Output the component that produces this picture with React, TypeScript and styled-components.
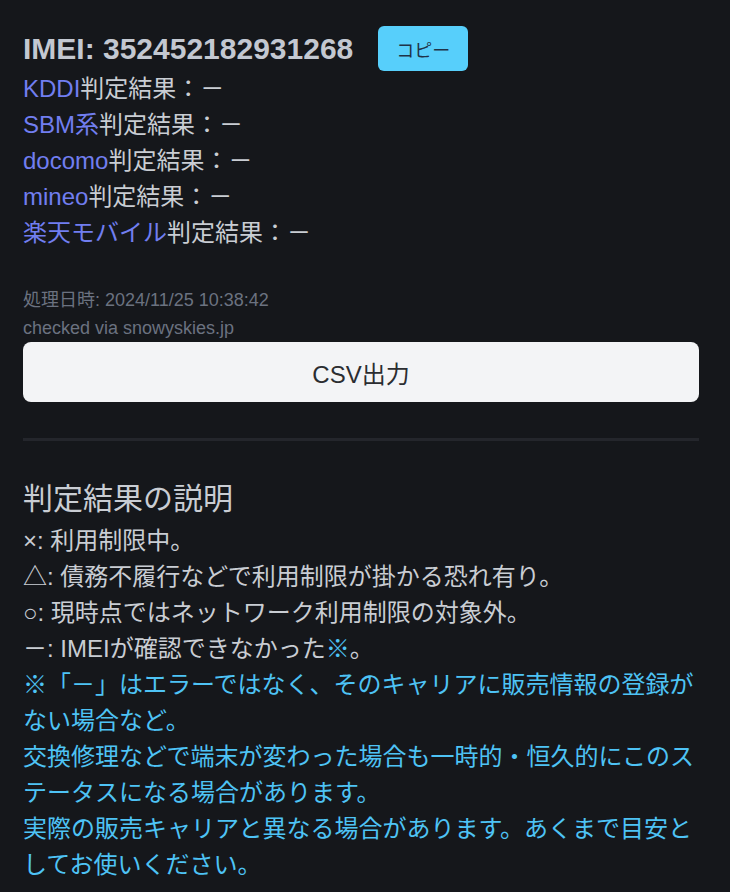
import React from 'react';
import styled, { createGlobalStyle } from 'styled-components';

const GlobalStyle = createGlobalStyle`
  html, body {
    margin: 0;
    padding: 0;
    background: #15171b;
  }
  body {
    font-family: "Liberation Sans", "Noto Sans CJK JP", sans-serif;
    color: #c9cdd3;
  }
`;

const Page = styled.main`
  min-height: 892px;
  box-sizing: border-box;
  padding: 26px 31px 0 23px;
`;

const ImeiRow = styled.div`
  display: flex;
  align-items: center;
  height: 45px;
`;

const Imei = styled.h1`
  margin: 0;
  font-size: 30px;
  line-height: 36px;
  font-weight: 700;
  color: #c3c8d1;
`;

const CopyButton = styled.button`
  margin-left: 25px;
  width: 90px;
  height: 45px;
  border: none;
  border-radius: 6px;
  background: #57cffb;
  color: #1f3348;
  font-family: "Liberation Sans", "Noto Sans CJK JP", sans-serif;
  font-size: 18px;
  cursor: pointer;
`;

const ResultList = styled.div`
  display: flex;
  flex-direction: column;
`;

const ResultLine = styled.div`
  font-size: 24px;
  line-height: 36px;
`;

const Carrier = styled.span`
  color: #717ef0;
`;

const Meta = styled.div`
  margin-top: 35px;
  font-size: 18px;
  line-height: 28px;
  color: #6b7280;
`;

const CsvButton = styled.button`
  display: block;
  width: 100%;
  height: 60px;
  border: none;
  border-radius: 8px;
  background: #f3f4f6;
  color: #2b2d31;
  font-family: "Liberation Sans", "Noto Sans CJK JP", sans-serif;
  font-size: 24px;
  cursor: pointer;
`;

const Divider = styled.hr`
  margin: 36px 0 0;
  border: none;
  height: 3px;
  background: #24262c;
`;

const SectionTitle = styled.h2`
  margin: 40px 0 6px;
  font-size: 30px;
  line-height: 36px;
  font-weight: 400;
  color: #c9cdd3;
`;

const Para = styled.p<{ $note?: boolean }>`
  margin: 0;
  font-size: 24px;
  line-height: 36px;
  color: ${(p) => (p.$note ? '#4ec3f5' : '#c9cdd3')};
`;

const Mark = styled.span`
  color: #4ec3f5;
`;

const carriers = ['KDDI', 'SBM系', 'docomo', 'mineo', '楽天モバイル'];

export default function App() {
  return (
    <>
      <GlobalStyle />
      <Page>
        <ImeiRow>
          <Imei>IMEI: 352452182931268</Imei>
          <CopyButton>コピー</CopyButton>
        </ImeiRow>
        <ResultList>
          {carriers.map((c) => (
            <ResultLine key={c}>
              <Carrier>{c}</Carrier>判定結果：－
            </ResultLine>
          ))}
        </ResultList>
        <Meta>
          処理日時: 2024/11/25 10:38:42
          <br />
          checked via snowyskies.jp
        </Meta>
        <CsvButton>CSV出力</CsvButton>
        <Divider />
        <SectionTitle>判定結果の説明</SectionTitle>
        <Para>×: 利用制限中。</Para>
        <Para>△: 債務不履行などで利用制限が掛かる恐れ有り。</Para>
        <Para>○: 現時点ではネットワーク利用制限の対象外。</Para>
        <Para>
          －: IMEIが確認できなかった<Mark>※</Mark>。
        </Para>
        <Para $note>※「－」はエラーではなく、そのキャリアに販売情報の登録がない場合など。</Para>
        <Para $note>交換修理などで端末が変わった場合も一時的・恒久的にこのステータスになる場合があります。</Para>
        <Para $note>実際の販売キャリアと異なる場合があります。あくまで目安としてお使いください。</Para>
      </Page>
    </>
  );
}
